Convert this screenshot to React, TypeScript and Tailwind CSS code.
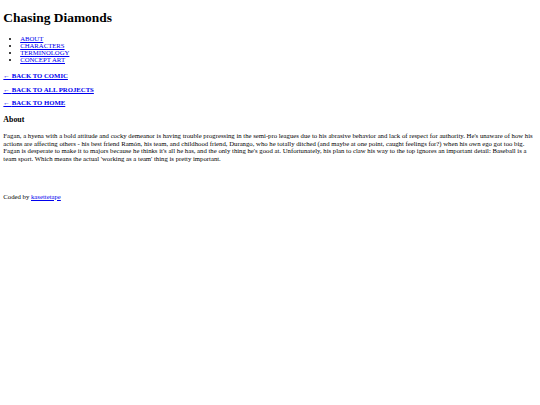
const navLinks = ['ABOUT', 'CHARACTERS', 'TERMINOLOGY', 'CONCEPT ART'];
const backLinks = ['BACK TO COMIC', 'BACK TO ALL PROJECTS', 'BACK TO HOME'];

const App = () => {
  return (
    <div className="bg-white min-h-[405px] px-[3.36px] pt-px pb-[3.36px] text-black text-[6.72px] leading-[normal] font-['Liberation_Serif',serif]">
      <h1 className="text-[13.44px] font-bold my-[9px]">Chasing Diamonds</h1>

      <ul className="list-disc pl-[16.8px] my-[9px]">
        {navLinks.map((item) => (
          <li key={item}>
            <a href="#" className="text-[#0000ee] underline">
              {item}
            </a>
          </li>
        ))}
      </ul>

      {backLinks.map((item) => (
        <p key={item} className="font-bold my-[6.72px]">
          <a href="#" className="text-[#0000ee] underline">
            ← {item}
          </a>
        </p>
      ))}

      <h3 className="text-[7.86px] font-bold mt-[8.5px] mb-[7.86px]">About</h3>
      <p className="leading-[7.72px] my-[7.86px]">
        Fagan, a hyena with a bold attitude and cocky demeanor is having trouble progressing in the semi-pro
        leagues due to his abrasive behavior and lack of respect for authority. He's unaware of how his actions
        are affecting others - his best friend Ramón, his team, and childhood friend, Durango, who he totally
        ditched (and maybe at one point, caught feelings for?) when his own ego got too big. Fagan is desperate
        to make it to majors because he thinks it's all he has, and the only thing he's good at. Unfortunately,
        his plan to claw his way to the top ignores an important detail: Baseball is a team sport. Which means
        the actual 'working as a team' thing is pretty important.
      </p>

      <p className="mt-[30px]">
        Coded by{' '}
        <a href="#" className="text-[#0000ee] underline">
          kasettetape
        </a>
      </p>
    </div>
  );
};

export default App;
